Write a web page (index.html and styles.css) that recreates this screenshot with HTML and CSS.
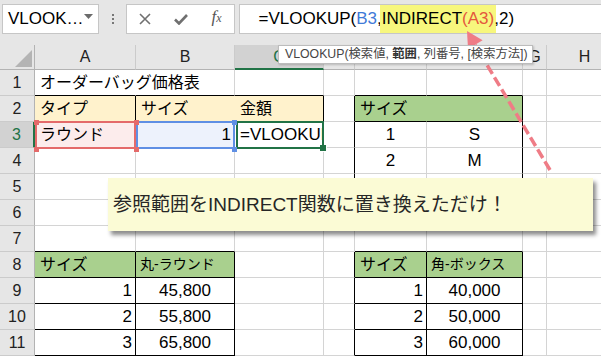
FILE: index.html
```html
<!DOCTYPE html>
<html lang="ja">
<head>
<meta charset="utf-8">
<title>VLOOKUP INDIRECT</title>
<link rel="stylesheet" href="styles.css">
</head>
<body>
<div class="app">
  <div class="toolbar">
    <div class="namebox">VLOOK…
      <svg class="dd" width="9" height="5" viewBox="0 0 9 5"><polygon points="0,0 9,0 4.5,5" fill="#6b6b6b"/></svg>
    </div>
    <div class="grip"><span></span><span></span><span></span></div>
    <div class="btns">
      <div class="btn"><svg width="12" height="12" viewBox="0 0 12 12"><path d="M1 1 L11 11 M11 1 L1 11" stroke="#707070" stroke-width="1.6" fill="none"/></svg></div>
      <div class="btn"><svg width="14" height="11" viewBox="0 0 14 11"><path d="M1 5.5 L5 9.5 L13 1" stroke="#707070" stroke-width="2.6" fill="none"/></svg></div>
      <div class="btn fx"><i>f</i><i class="sub">x</i></div>
    </div>
    <div class="formula">=VLOOKUP(<span class="rb">B3</span>,<span class="hl">INDIRECT<span class="rr">(A3)</span></span>,2)</div>
  </div>

  <div class="sheet">
    <div class="h corner"><svg width="34" height="24" viewBox="0 0 34 24"><polygon points="15,22 32,22 32,5" fill="#b4b4b4"/></svg></div>
    <div class="h">A</div><div class="h">B</div><div class="h sel">C</div><div class="h">D</div><div class="h">E</div><div class="h">F</div><div class="h">G</div><div class="h">H</div>

    <div class="r">1</div>
    <div class="c bb nrw">オーダーバッグ価格表</div>
    <div class="c bb"></div><div class="c bb"></div><div class="c"></div>
    <div class="c bb"></div><div class="c bb"></div><div class="c"></div><div class="c"></div>

    <div class="r">2</div>
    <div class="c fo br bb">タイプ</div>
    <div class="c fo bb nro">サイズ</div>
    <div class="c fo br bb">金額</div>
    <div class="c br"></div>
    <div class="c fg bb nrg">サイズ</div>
    <div class="c fg br bb"></div>
    <div class="c"></div><div class="c"></div>

    <div class="r sel">3</div>
    <div class="c pk bb ref red">ラウンド</div>
    <div class="c bl bb ref blue num">1</div>
    <div class="c bb act"><span class="clip">=VLOOKUP</span></div>
    <div class="c br"></div>
    <div class="c num ctr">1</div>
    <div class="c br num ctr">S</div>
    <div class="c"></div><div class="c"></div>

    <div class="r">4</div>
    <div class="c"></div><div class="c"></div><div class="c"></div><div class="c br"></div>
    <div class="c num ctr">2</div>
    <div class="c br num ctr">M</div>
    <div class="c"></div><div class="c"></div>

    <div class="r">5</div>
    <div class="c"></div><div class="c"></div><div class="c"></div><div class="c br"></div>
    <div class="c bb"></div>
    <div class="c br bb"></div>
    <div class="c"></div><div class="c"></div>

    <div class="r">6</div>
    <div class="c"></div><div class="c"></div><div class="c"></div><div class="c"></div>
    <div class="c"></div><div class="c"></div><div class="c"></div><div class="c"></div>

    <div class="r">7</div>
    <div class="c bb"></div><div class="c bb"></div><div class="c"></div><div class="c"></div>
    <div class="c bb"></div><div class="c bb"></div><div class="c"></div><div class="c"></div>

    <div class="r">8</div>
    <div class="c fg br bb">サイズ</div>
    <div class="c fg br bb sm">丸-ラウンド</div>
    <div class="c"></div><div class="c br"></div>
    <div class="c fg br bb">サイズ</div>
    <div class="c fg br bb sm">角-ボックス</div>
    <div class="c"></div><div class="c"></div>

    <div class="r">9</div>
    <div class="c br bb num">1</div>
    <div class="c br bb num ctr">45,800</div>
    <div class="c"></div><div class="c br"></div>
    <div class="c br bb num">1</div>
    <div class="c br bb num ctr">40,000</div>
    <div class="c"></div><div class="c"></div>

    <div class="r">10</div>
    <div class="c br bb num">2</div>
    <div class="c br bb num ctr">55,800</div>
    <div class="c"></div><div class="c br"></div>
    <div class="c br bb num">2</div>
    <div class="c br bb num ctr">50,000</div>
    <div class="c"></div><div class="c"></div>

    <div class="r">11</div>
    <div class="c br bb num">3</div>
    <div class="c br bb num ctr">65,800</div>
    <div class="c"></div><div class="c br"></div>
    <div class="c br bb num">3</div>
    <div class="c br bb num ctr">60,000</div>
    <div class="c"></div><div class="c"></div>
  </div>

  <svg class="arrow" width="601" height="357" viewBox="0 0 601 357">
    <line x1="550" y1="170" x2="475" y2="45" stroke="#ef7c86" stroke-width="3.5" stroke-dasharray="10 4"/>
    <polygon points="467,31 482.6,40.3 468,49.1" fill="#ef7c86"/>
  </svg>

  <div class="tip">VLOOKUP(検索値, <b>範囲</b>, 列番号, [検索方法])</div>

  <div class="callout">参照範囲をINDIRECT関数に置き換えただけ！</div>
</div>
</body>
</html>
```

FILE: styles.css
```css
* { box-sizing: border-box; }
html, body { margin: 0; padding: 0; }
body {
  width: 601px;
  height: 357px;
  overflow: hidden;
  background: #fff;
  font-family: "Liberation Sans", "Noto Sans CJK JP", sans-serif;
  color: #000;
}
.app { position: relative; width: 601px; height: 357px; overflow: hidden; }

/* toolbar */
.toolbar {
  height: 45px;
  background: #e6e6e6;
  display: flex;
  align-items: flex-start;
  padding: 4px 0 0 2px;
}
.namebox {
  width: 100px;
  height: 30px;
  background: #fff;
  border: 1px solid #c6c6c6;
  display: flex;
  align-items: center;
  padding-left: 5px;
  font-size: 17px;
}
.namebox .dd { margin-left: auto; margin-right: 5px; margin-top: -6px; }
.grip {
  width: 31px;
  height: 30px;
  display: flex;
  flex-direction: column;
  align-items: center;
  justify-content: center;
  gap: 2px;
}
.grip span { width: 2px; height: 2px; background: #777; display: block; }
.btns {
  width: 109px;
  height: 30px;
  background: #fff;
  border: 1px solid #c6c6c6;
  display: flex;
}
.btn {
  width: 36px;
  height: 28px;
  display: flex;
  align-items: center;
  justify-content: center;
}
.btn.fx {
  font-family: "Liberation Serif", serif;
  color: #555;
  font-size: 17px;
  align-items: baseline;
  padding-top: 2px;
}
.btn.fx .sub { font-size: 12px; }
.formula {
  margin-left: 4px;
  width: 400px;
  height: 30px;
  background: #fff;
  border: 1px solid #c6c6c6;
  border-right: none;
  padding-left: 18px;
  font-size: 17px;
  line-height: 28px;
  white-space: nowrap;
}
.rb { color: #3f7ad8; }
.rr { color: #e4573d; }
.hl {
  display: inline-block;
  background: #f7f77d;
  padding: 0 2px;
  margin: 0 -2px;
  line-height: 28px;
}

/* sheet grid */
.sheet {
  display: grid;
  grid-template-columns: 35px 101px 99px 89px 31px 72px 96px 24px 76px;
  grid-template-rows: 25px repeat(11, 26px);
  width: 623px;
  background: #fff;
}
.h {
  background: #e6e6e6;
  border-right: 1px solid #cbcbcb;
  border-bottom: 1px solid #b3b3b3;
  text-align: center;
  font-size: 16px;
  line-height: 24px;
  color: #222;
}
.h.corner { border-right-color: #b3b3b3; }
.h.sel {
  background: #d2d2d2;
  color: #217346;
  border-bottom: 2px solid #217346;
}
.r {
  background: #e6e6e6;
  border-right: 1px solid #b3b3b3;
  border-bottom: 1px solid #cbcbcb;
  text-align: center;
  font-size: 16px;
  line-height: 25px;
  color: #222;
}
.r.sel {
  background: #d2d2d2;
  color: #217346;
  border-right: 2px solid #217346;
}
.c {
  border-right: 1px solid #d4d4d4;
  border-bottom: 1px solid #d4d4d4;
  font-size: 16px;
  line-height: 25px;
  padding: 0 3px 0 5px;
  white-space: nowrap;
}
.br { border-right-color: #000; }
.bb { border-bottom-color: #000; }
.nrw { border-right-color: transparent; }
.fo { background: #fff2cc; }
.fg { background: #a9d08e; }
.nro { border-right-color: #fff2cc; }
.nrg { border-right-color: #a9d08e; }
.pk { background: #fcecec; }
.bl { background: #edf2fc; }
.num { font-size: 17px; text-align: right; }
.ctr { text-align: center; padding: 0; }
.sm { font-size: 14px; padding-left: 4px; }

/* reference highlight frames */
.ref, .act { position: relative; }
.ref::after, .act::after {
  content: "";
  position: absolute;
  top: -1px;
  bottom: -2px;
  border: 2px solid;
}
.ref::before, .act::before {
  content: "";
  position: absolute;
  width: 5px;
  height: 5px;
}
.red::after { left: 0; right: -1px; border-color: #e46a6a; z-index: 3; }
.red::before {
  left: -1px; top: -2px; background: #e46a6a; z-index: 3;
  box-shadow: 100px 0 0 #e46a6a, 0 27px 0 #e46a6a, 100px 27px 0 #e46a6a;
}
.blue::after { left: 0; right: -1px; border-color: #5f8fe4; z-index: 2; }
.blue::before {
  left: -2px; top: -2px; background: #5f8fe4; z-index: 2;
  box-shadow: 98px 0 0 #5f8fe4, 0 27px 0 #5f8fe4, 98px 27px 0 #5f8fe4;
}
.act { padding-right: 0; }
.act::after { left: 1px; right: -1px; border-color: #217346; z-index: 1; }
.act::before {
  right: -4px; bottom: -5px; width: 6px; height: 6px;
  background: #217346; border: 1px solid #fff; z-index: 1;
}
.clip { display: block; overflow: hidden; font-size: 17px; }

/* overlays */
.arrow { position: absolute; left: 0; top: 0; z-index: 5; }
.tip {
  position: absolute;
  left: 278px;
  top: 45px;
  width: 255px;
  height: 19px;
  background: #fff;
  border: 1px solid #bcbcbc;
  box-shadow: 1px 1px 2px rgba(0, 0, 0, 0.2);
  padding-left: 6px;
  font-size: 12.3px;
  line-height: 17px;
  color: #444;
  white-space: nowrap;
  z-index: 6;
}
.tip b { font-weight: bold; color: #333; }
.callout {
  position: absolute;
  left: 108px;
  top: 178px;
  width: 485px;
  height: 53px;
  background: #fbfbd5;
  box-shadow: 3px 4px 4px rgba(0, 0, 0, 0.45);
  padding-left: 5px;
  font-size: 19px;
  line-height: 53px;
  color: #262626;
  white-space: nowrap;
  z-index: 7;
}
```
